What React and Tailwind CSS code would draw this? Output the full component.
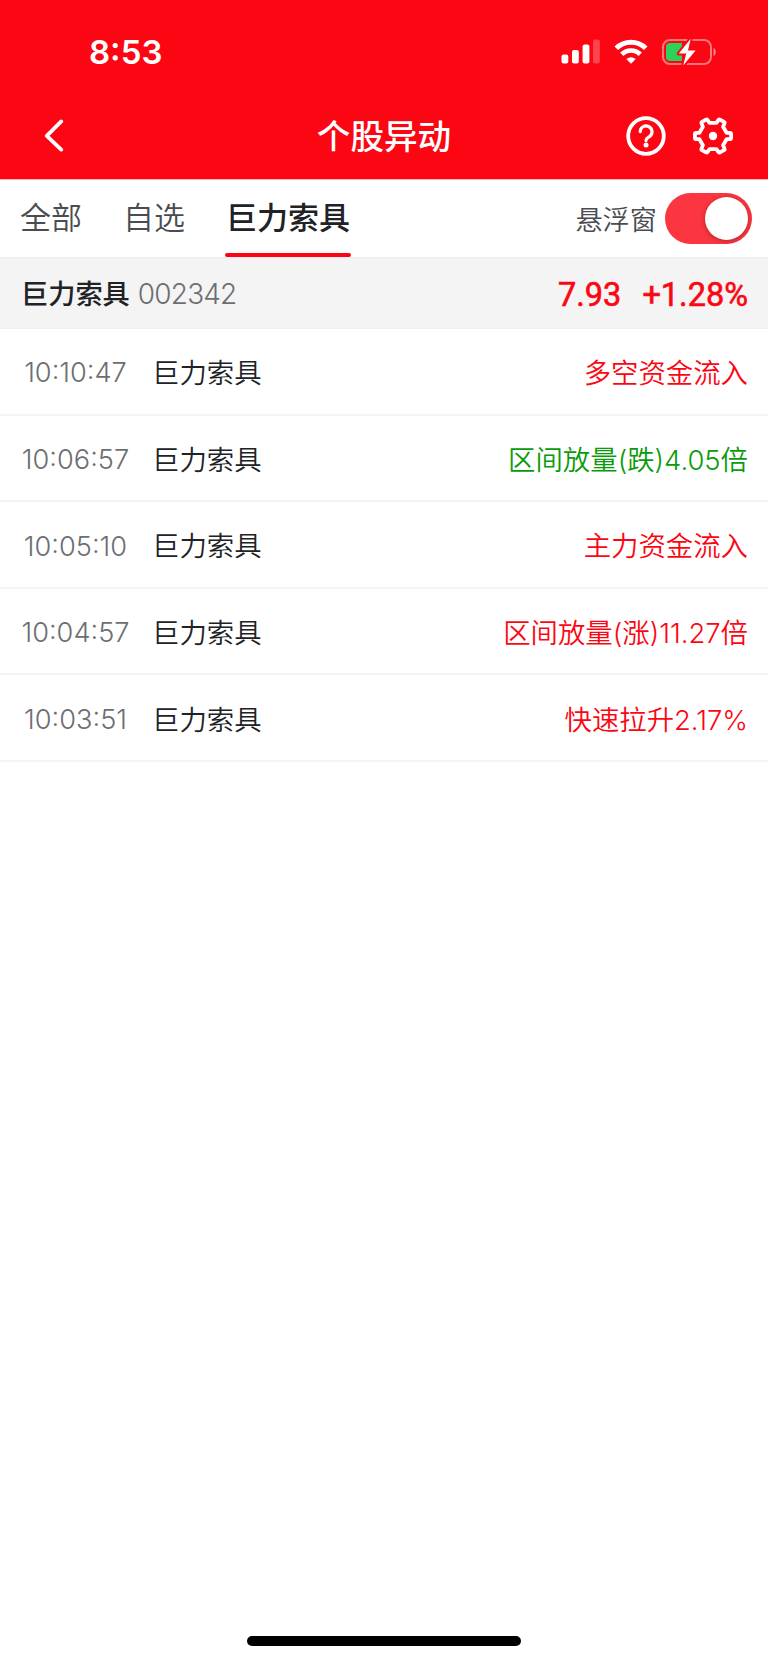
// Stock alerts screen: status bar, title bar, tabs and the list of moves
const ALERTS = [
  { time: "10:10:47", name: "巨力索具", text: "多空资金流入", up: true },
  { time: "10:06:57", name: "巨力索具", text: "区间放量(跌)4.05倍", up: false },
  { time: "10:05:10", name: "巨力索具", text: "主力资金流入", up: true },
  { time: "10:04:57", name: "巨力索具", text: "区间放量(涨)11.27倍", up: true },
  { time: "10:03:51", name: "巨力索具", text: "快速拉升2.17%", up: true },
];

function StatusBar() {
  return (
    <div className="flex h-[94px] items-center justify-between pt-[9px] pl-[89px] pr-[51px]">
      <span className="pt-px text-[33px] leading-none font-semibold">8:53</span>

      <div className="flex items-center">
        {/* Signal */}
        <svg width="40" height="26" viewBox="0 0 40 26" fill="currentColor">
          <rect x="1.5" y="15.5" width="6.8" height="9" rx="2" />
          <rect x="12" y="11" width="6.8" height="13.5" rx="2" />
          <rect x="22.6" y="5.5" width="6.8" height="19" rx="2" />
          <rect x="33" y="0.5" width="6.8" height="24" rx="2" opacity="0.25" />
        </svg>

        {/* Wifi */}
        <svg className="ml-[14px]" width="34" height="26" viewBox="0 0 34 26" fill="none" stroke="currentColor">
          <path d="M2.3 9.2a21 21 0 0 1 29.4 0" strokeWidth="5" />
          <path d="M7.7 15.2a13.6 13.6 0 0 1 18.6 0" strokeWidth="4.6" />
          <path d="M12.3 20a7.6 7.6 0 0 1 9.4 0L17 24.7z" fill="currentColor" stroke="none" />
        </svg>

        {/* Battery, charging */}
        <svg className="ml-[14px]" width="55" height="28" viewBox="0 0 55 28" fill="none">
          <rect x="1" y="2" width="48" height="24" rx="7" stroke="#fff" strokeOpacity="0.45" strokeWidth="2" />
          <path d="M51.5 10c3 1 3 7 0 8z" fill="#fff" fillOpacity="0.5" />
          <path d="M8 5h12v18H8a4 4 0 0 1-4-4V9a4 4 0 0 1 4-4z" fill="#30d158" />
          <path d="M28.7.8 16.8 15.6h7.4L21.2 27.4 33.6 12.4H26z" fill="#fff" stroke="#fb0612" strokeWidth="4" strokeLinejoin="round" paintOrder="stroke" />
        </svg>
      </div>
    </div>
  );
}

function TitleBar() {
  return (
    <div className="grid h-[85px] grid-cols-3 items-center px-[35px] pb-[2px]">
      <svg className="ml-[9px]" width="20" height="34" viewBox="0 0 20 34" fill="none" stroke="currentColor" strokeWidth="3.8" strokeLinecap="round" strokeLinejoin="round">
        <path d="M17.2 2.4 2.8 16.800l14.400 13.800" />
      </svg>
      <h1 className="justify-self-center pt-[2px] text-[33.6px] leading-none font-medium whitespace-nowrap">个股异动</h1>
      <div className="flex items-center justify-end gap-[27px]">
        <svg width="40" height="40" viewBox="0 0 40 40" fill="none" stroke="currentColor" strokeLinecap="round">
          <circle cx="20" cy="20" r="17.8" strokeWidth="3.8" />
          <path d="M14.2 15.600a5.900 5.900 0 1 1 9.800 4.600c-2.300 1.600-4 2-4 4.400" strokeWidth="3.2" />
          <circle cx="20" cy="29" r="2.5" fill="currentColor" stroke="none" />
        </svg>
        <svg width="40" height="40" viewBox="0 0 40 40" fill="none" stroke="currentColor" strokeLinejoin="round">
          <path
            d="M16.500 6.800h7l2-2.900q.6-.8 1.500-.3l4 2.300q.9.500.5 1.500l-1.400 3.400 3.500 6h3.200q1.300 0 1.300 1.200v4q0 1.200-1.300 1.200h-3.200l-3.500 6 1.400 3.400q.4 1-.5 1.500l-4 2.300q-.9.500-1.500-.3l-2-2.900h-7l-2 2.900q-.6.800-1.500.3l-4-2.300q-.9-.500-.5-1.500l1.400-3.400-3.500-6H3.200q-1.300 0-1.300-1.200v-4q0-1.200 1.300-1.200h3.200l3.500-6L8.500 7.400q-.4-1 .5-1.500l4-2.300q.9-.500 1.500.3z"
            strokeWidth="3.8"
          />
          <circle cx="20" cy="20" r="4.2" fill="currentColor" stroke="none" />
        </svg>
      </div>
    </div>
  );
}

function Tabs() {
  return (
    <div className="flex h-[78px] items-stretch justify-between border-t border-[#ffb3b5] pl-[20px] pr-4">
      <div className="flex text-[31px] leading-[76px] font-[350] text-[#4a4c50]">
        <span className="w-[103px]">全部</span>
        <span className="w-[102px]">自选</span>
        <div className="flex w-[126px] flex-col items-center justify-between font-medium text-[#202226]">
          <span className="h-[73px]">巨力索具</span>
          <div className="h-[4px] w-full shrink-0 rounded-[2px] bg-[#fb0612]" />
        </div>
      </div>

      <div className="flex items-center">
        <span className="mr-[8px] pt-[5px] text-[27.2px] font-[350] text-[#4a4c50]">悬浮窗</span>
        <button className="flex h-[51px] w-[87px] items-center justify-end rounded-full bg-[#fb3640] pr-[4px]">
          <span className="size-[43px] rounded-full bg-white shadow-[0_1px_5px_rgba(0,0,0,0.3)]" />
        </button>
      </div>
    </div>
  );
}

function Quote() {
  return (
    <div className="flex h-[72px] items-center justify-between border-y border-[#eeeeef] bg-[#f4f4f4] pt-[3px] pl-[21px] pr-[20px]">
      <div className="flex items-center gap-[8px] leading-none">
        <span className="text-[27.2px] font-medium text-[#202226]">巨力索具</span>
        <span className="pb-[2px] text-[28px] font-light tracking-[-0.8px] text-[#6c6e72]">002342</span>
      </div>
      <div className="flex items-center gap-[21px] pt-[2px] font-[Roboto] text-[32.5px] leading-none font-normal text-[#fb0612] [-webkit-text-stroke:0.6px_#fb0612]">
        <span>7.93</span>
        <span>+1.28%</span>
      </div>
    </div>
  );
}

function AlertRow({ alert }) {
  return (
    <li className="flex h-[86.6px] items-center border-b-2 border-[#f3f3f4] pt-[5px] pr-[20px] text-[27.4px] font-[350] whitespace-nowrap">
      <span className="w-[151px] text-center text-[27.2px] font-light text-[#6c6e72]">{alert.time}</span>
      <span className="ml-px text-[#202226]">{alert.name}</span>
      <span className={alert.up ? "ml-auto text-[#fb0612]" : "ml-auto text-[#0a9b0a]"}>{alert.text}</span>
    </li>
  );
}

export default function App() {
  return (
    <div className="flex h-[1663px] w-[768px] flex-col bg-white font-[Inter,'Noto_Sans_CJK_SC',sans-serif]">
      <header className="bg-[#fb0612] text-white">
        <StatusBar />
        <TitleBar />
      </header>
      <Tabs />
      <Quote />
      <ul>
        {ALERTS.map((alert) => (
          <AlertRow key={alert.time} alert={alert} />
        ))}
      </ul>

      {/* Home indicator */}
      <div className="mx-auto mt-auto mb-[17px] h-[10px] w-[274px] rounded-full bg-black" />
    </div>
  );
}
